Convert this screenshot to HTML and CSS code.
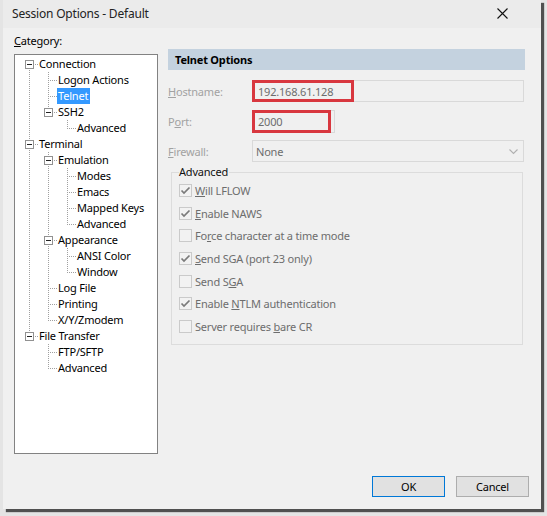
FILE: index.html
```html
<!DOCTYPE html>
<html>
<head>
<meta charset="utf-8">
<link rel="stylesheet" href="styles.css">
</head>
<body>
<div class="dialog">
  <div class="titlebar">
    <span class="title">Session Options - Default</span>
    <span class="close"><svg width="11" height="11" viewBox="0 0 11 11"><path d="M0.5 0.5 L10.5 10.5 M10.5 0.5 L0.5 10.5" stroke="#111" stroke-width="1.1" fill="none"/></svg></span>
  </div>
  <div class="content">
    <div class="main">
      <div class="catcol">
        <div class="catlabel"><u>C</u>ategory:</div>
        <div class="tree">
          <div class="row"><span class="g rf"><span class="box"></span></span><span class="lbl">Connection</span></div>
          <div class="row"><span class="g v"></span><span class="g t"></span><span class="lbl">Logon Actions</span></div>
          <div class="row"><span class="g v"></span><span class="g t"></span><span class="lbl sel">Telnet</span></div>
          <div class="row"><span class="g v"></span><span class="g l"><span class="box"></span></span><span class="lbl">SSH2</span></div>
          <div class="row"><span class="g v"></span><span class="g"></span><span class="g l"></span><span class="lbl">Advanced</span></div>
          <div class="row"><span class="g t"><span class="box"></span></span><span class="lbl">Terminal</span></div>
          <div class="row"><span class="g v"></span><span class="g t"><span class="box"></span></span><span class="lbl">Emulation</span></div>
          <div class="row"><span class="g v"></span><span class="g v"></span><span class="g t"></span><span class="lbl">Modes</span></div>
          <div class="row"><span class="g v"></span><span class="g v"></span><span class="g t"></span><span class="lbl">Emacs</span></div>
          <div class="row"><span class="g v"></span><span class="g v"></span><span class="g t"></span><span class="lbl">Mapped Keys</span></div>
          <div class="row"><span class="g v"></span><span class="g v"></span><span class="g l"></span><span class="lbl">Advanced</span></div>
          <div class="row"><span class="g v"></span><span class="g t"><span class="box"></span></span><span class="lbl">Appearance</span></div>
          <div class="row"><span class="g v"></span><span class="g v"></span><span class="g t"></span><span class="lbl">ANSI Color</span></div>
          <div class="row"><span class="g v"></span><span class="g v"></span><span class="g l"></span><span class="lbl">Window</span></div>
          <div class="row"><span class="g v"></span><span class="g t"></span><span class="lbl">Log File</span></div>
          <div class="row"><span class="g v"></span><span class="g t"></span><span class="lbl">Printing</span></div>
          <div class="row"><span class="g v"></span><span class="g l"></span><span class="lbl">X/Y/Zmodem</span></div>
          <div class="row"><span class="g l"><span class="box"></span></span><span class="lbl">File Transfer</span></div>
          <div class="row"><span class="g"></span><span class="g t"></span><span class="lbl">FTP/SFTP</span></div>
          <div class="row"><span class="g"></span><span class="g l"></span><span class="lbl">Advanced</span></div>
        </div>
      </div>
      <div class="panel">
        <div class="header">Telnet Options</div>
        <div class="form">
          <div class="frow">
            <span class="flabel"><u>H</u>ostname:</span>
            <span class="input host"><span class="val">192.168.61.128</span><span class="mark mhost"></span></span>
          </div>
          <div class="frow">
            <span class="flabel">P<u>o</u>rt:</span>
            <span class="input port"><span class="val">2000</span><span class="mark mport"></span></span>
          </div>
          <div class="frow">
            <span class="flabel"><u>F</u>irewall:</span>
            <span class="input select"><span class="val">None</span><svg class="chev" width="9" height="6" viewBox="0 0 9 6"><path d="M0.5 0.5 L4.5 4.5 L8.5 0.5" stroke="#b0b0b0" stroke-width="1.1" fill="none"/></svg></span>
          </div>
        </div>
        <fieldset class="group">
          <legend>Advanced</legend>
          <div class="cb"><span class="box13 on"><svg width="11" height="11" viewBox="0 0 11 11"><path d="M1.5 5.5 L4 8 L9.5 2.5" stroke="#7a7a7a" stroke-width="1.7" fill="none"/></svg></span><span class="ct"><u>W</u>ill LFLOW</span></div>
          <div class="cb"><span class="box13 on"><svg width="11" height="11" viewBox="0 0 11 11"><path d="M1.5 5.5 L4 8 L9.5 2.5" stroke="#7a7a7a" stroke-width="1.7" fill="none"/></svg></span><span class="ct"><u>E</u>nable NAWS</span></div>
          <div class="cb"><span class="box13"></span><span class="ct">Fo<u>r</u>ce character at a time mode</span></div>
          <div class="cb"><span class="box13 on"><svg width="11" height="11" viewBox="0 0 11 11"><path d="M1.5 5.5 L4 8 L9.5 2.5" stroke="#7a7a7a" stroke-width="1.7" fill="none"/></svg></span><span class="ct"><u>S</u>end SGA (port 23 only)</span></div>
          <div class="cb"><span class="box13"></span><span class="ct">Send S<u>G</u>A</span></div>
          <div class="cb"><span class="box13 on"><svg width="11" height="11" viewBox="0 0 11 11"><path d="M1.5 5.5 L4 8 L9.5 2.5" stroke="#7a7a7a" stroke-width="1.7" fill="none"/></svg></span><span class="ct">Enable <u>N</u>TLM authentication</span></div>
          <div class="cb"><span class="box13"></span><span class="ct">Server requires <u>b</u>are CR</span></div>
        </fieldset>
      </div>
    </div>
    <div class="buttons">
      <span class="btn ok">OK</span>
      <span class="btn">Cancel</span>
    </div>
  </div>
</div>
</body>
</html>
```

FILE: styles.css
```css
* { box-sizing: border-box; }
html, body { margin: 0; padding: 0; }
body {
  width: 547px;
  height: 516px;
  background: #e4e4e4;
  font-family: "Noto Sans", "Open Sans", sans-serif;
  font-size: 11px;
  letter-spacing: -0.2px;
  color: #000;
  overflow: hidden;
}
u { text-decoration: underline; text-underline-offset: 1px; }

.dialog {
  margin-left: 3px;
  width: 538px;
  height: 509px;
  background: #f0f0f0;
  box-shadow: 3px 3px 1px rgba(0,0,0,0.65);
  display: flex;
  flex-direction: column;
}

.titlebar {
  height: 28px;
  background: #ebebeb;
  display: flex;
  align-items: center;
  justify-content: space-between;
  padding: 0 33px 2px 9px;
}
.title { font-size: 12px; color: #222; }
.close { display: flex; }

.content {
  flex: 1;
  display: flex;
  flex-direction: column;
}
.main {
  display: flex;
  gap: 10px;
  padding-left: 11px;
}
.catlabel {
  margin-top: 6px;
  height: 14px;
  line-height: 14px;
  font-size: 11px;
}
.tree {
  margin-top: 6px;
  width: 144px;
  height: 400px;
  background: #fff;
  border: 1px solid #828282;
  padding: 1px 0 0 4px;
}
.row {
  height: 16px;
  display: flex;
  align-items: center;
  white-space: nowrap;
}
.g {
  width: 19px;
  height: 16px;
  flex: none;
  display: flex;
  align-items: center;
  background-repeat: no-repeat;
}
.g.v {
  background-image: repeating-linear-gradient(to bottom, #a0a0a0 0 1px, transparent 1px 2px);
  background-size: 1px 16px;
  background-position: 10px 0;
}
.g.t {
  background-image:
    repeating-linear-gradient(to bottom, #a0a0a0 0 1px, transparent 1px 2px),
    repeating-linear-gradient(to right, #a0a0a0 0 1px, transparent 1px 2px);
  background-size: 1px 16px, 9px 1px;
  background-position: 10px 0, 10px 8px;
}
.g.l {
  background-image:
    repeating-linear-gradient(to bottom, #a0a0a0 0 1px, transparent 1px 2px),
    repeating-linear-gradient(to right, #a0a0a0 0 1px, transparent 1px 2px);
  background-size: 1px 9px, 9px 1px;
  background-position: 10px 0, 10px 8px;
}
.g.rf {
  background-image:
    repeating-linear-gradient(to bottom, #a0a0a0 0 1px, transparent 1px 2px),
    repeating-linear-gradient(to right, #a0a0a0 0 1px, transparent 1px 2px);
  background-size: 1px 8px, 9px 1px;
  background-position: 10px 8px, 10px 8px;
}
.box {
  width: 9px;
  height: 9px;
  margin-left: 6px;
  border: 1px solid #919191;
  background: linear-gradient(#222, #222) center / 5px 1px no-repeat, #fff;
}
.lbl {
  height: 16px;
  line-height: 16px;
  padding: 0 2px 0 1px;
  font-size: 11px;
}
.lbl.sel { background: #3399ff; color: #fff; }

.panel {
  margin-top: 21px;
  width: 357px;
}
.header {
  height: 21px;
  line-height: 21px;
  background: #c4d2df;
  font-weight: bold;
  font-size: 11px;
  padding-left: 7px;
}
.form {
  margin-top: 10px;
  display: flex;
  flex-direction: column;
  gap: 8px;
}
.frow {
  display: flex;
  align-items: center;
  height: 22px;
}
.flabel {
  width: 84px;
  color: #a2a2a2;
}
.input {
  position: relative;
  height: 22px;
  border: 1px solid #d9d9d9;
  display: flex;
  align-items: center;
  padding-left: 5px;
  color: #6d6d6d;
}
.input.host { width: 272px; }
.input.port { width: 83px; height: 23px; }
.input.select { width: 272px; padding-left: 3px; justify-content: space-between; padding-right: 5px; }
.chev { margin-top: 1px; }
.mark {
  position: absolute;
  border: 3px solid #d8373f;
  top: -1px;
  left: -1px;
}
.mhost { width: 102px; height: 22px; }
.mport { width: 79px; height: 23px; }

.group {
  margin: 3px 0 0 3px;
  width: 352px;
  height: 180px;
  border: 1px solid #dcdcdc;
  padding: 0 0 0 7px;
}
.group legend {
  padding: 0 1px 0 0;
  color: #111;
  line-height: 14px;
  height: 14px;
}
.cb {
  height: 22.7px;
  display: flex;
  align-items: center;
}
.box13 {
  width: 13px;
  height: 13px;
  border: 1px solid #cacaca;
  background: #f2f2f2;
  display: flex;
  align-items: center;
  justify-content: center;
  flex: none;
}
.ct {
  margin-left: 3px;
  color: #6d6d6d;
}

.buttons {
  margin-top: 22px;
  display: flex;
  justify-content: flex-end;
  gap: 11px;
  padding-right: 12px;
}
.btn {
  width: 73px;
  height: 21px;
  border: 1px solid #adadad;
  background: #e1e1e1;
  display: flex;
  align-items: center;
  justify-content: center;
  font-size: 11px;
}
.btn.ok { border-color: #0078d7; }
```
